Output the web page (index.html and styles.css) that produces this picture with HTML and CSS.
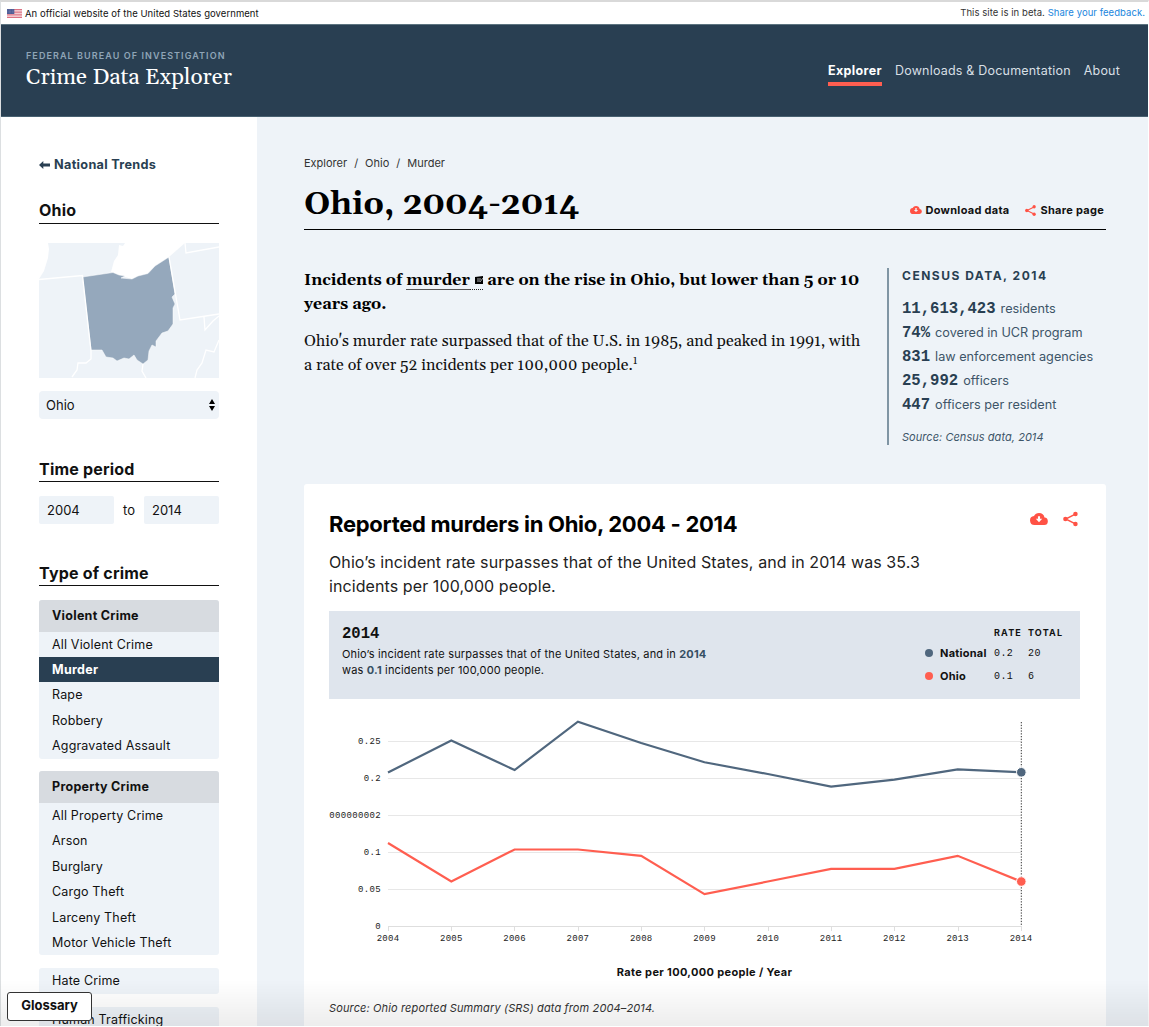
FILE: index.html
```html
<!DOCTYPE html>
<html lang="en">
<head>
<meta charset="utf-8">
<title>Crime Data Explorer</title>
<link rel="stylesheet" href="styles.css">
</head>
<body>
<svg class="defs" width="0" height="0" aria-hidden="true">
  <symbol id="cloud" viewBox="0 0 24 16"><path fill-rule="evenodd" d="M19.35 6.04A7.49 7.49 0 0 0 12 0C9.11 0 6.6 1.64 5.35 4.04A6 6 0 0 0 6 16h13a5 5 0 0 0 .35-9.96zM10.6 4.2h2.8v3.6h2.9L12 12.2 7.7 7.8h2.9z"/></symbol>
  <symbol id="share" viewBox="0 0 20 20"><path d="M16.5 3.5 3.5 10l13 6.5" fill="none" stroke="currentColor" stroke-width="1.9"/><circle cx="16.6" cy="3.2" r="3"/><circle cx="3.2" cy="10" r="3"/><circle cx="16.6" cy="16.8" r="3"/></symbol>
</svg>
<div class="page">
  <div class="banner">
    <div class="official">
      <svg class="flag" viewBox="0 0 15 9"><path fill="#fff" d="M0 0h15v9H0z"/><path stroke="#d4576c" stroke-width=".85" d="M0 .5h15M0 2.1h15M0 3.7h15M0 5.3h15M0 6.9h15M0 8.5h15"/><path fill="#4b5a94" d="M0 0h7.300v5H0z"/><path stroke="#a9b0d0" stroke-width=".5" stroke-dasharray=".6 .8" d="M.7 1h6M.7 2.400h6M.7 3.800h6"/></svg>
      <span>An official website of the United States government</span>
    </div>
    <div class="beta">This site is in beta. <a>Share your feedback.</a></div>
  </div>
  <header class="header">
    <div class="brand">
      <div class="agency">Federal Bureau of Investigation</div>
      <div class="site-name">Crime Data Explorer</div>
    </div>
    <nav class="nav"><a class="active">Explorer</a><a class="docs">Downloads &amp; Documentation</a><a>About</a></nav>
  </header>
  <div class="body">
    <aside class="sidebar">
      <a class="back"><svg viewBox="0 0 11 8"><path d="M4.300 0v2.500H11v3H4.300V8L0 4z"/></svg><span>National Trends</span></a>
      <h2 class="side-title">Ohio</h2>
      <svg class="map" viewBox="0 0 180 135">
        <path class="land" d="M0 0H180V135H0z"/>
        <path class="water" d="M0 36 5 28 9 15 10 6 9 0H0zM86 0 84 3 80 2 79 12 75 18 72 29 76 31 83 33 93 36 108 31 117 23 130 14 146 0z"/>
        <path class="state" d="M43.500 34 74 29.500 80 32 86 33 82 35 93 36 99 33 109 30.500 116 23 130 14 136 51 133 54 136 61 134 65 134 81 129 88 123 90 117 98 117 104 113 102 110 108 109 117 104 121 98 117 95 112 90 116 85 115 78 118 74 115 67 114 63 107 57 107 52 107z"/>
        <path class="line" d="M0 36.500 43.500 32.500 52 108 52 116 47 120 39 120 38 127 33 134M146 0 147 10 180 4M130 14 141 77 180 71M165 74 166 87 174 78 180 73M180 97 175 109 167 107 163 120 158 127 156 135M104 121 103 128 107 135"/>
      </svg>
      <div class="select"><span>Ohio</span><svg viewBox="0 0 6 12"><path d="M3 0 6 5H0zM0 7h6L3 12z"/></svg></div>
      <h2 class="side-title time">Time period</h2>
      <div class="years"><div class="year">2004</div><span>to</span><div class="year">2014</div></div>
      <h2 class="side-title type">Type of crime</h2>
      <ul class="crimes"><li class="group">Violent Crime</li><li>All Violent Crime</li><li class="selected">Murder</li><li>Rape</li><li>Robbery</li><li>Aggravated Assault</li></ul>
      <ul class="crimes"><li class="group">Property Crime</li><li>All Property Crime</li><li>Arson</li><li>Burglary</li><li>Cargo Theft</li><li>Larceny Theft</li><li>Motor Vehicle Theft</li></ul>
      <ul class="crimes"><li>Hate Crime</li></ul>
      <ul class="crimes"><li>Human Trafficking</li></ul>
    </aside>
    <main class="main">
      <div class="crumbs"><span>Explorer</span><span>/</span><span>Ohio</span><span>/</span><span>Murder</span></div>
      <div class="heading">
        <h1>Ohio, 2004-2014</h1>
        <div class="actions"><a><svg class="i-cloud"><use href="#cloud"/></svg>Download data</a><a><svg class="i-share"><use href="#share"/></svg>Share page</a></div>
      </div>
      <section class="intro">
        <div class="story">
          <p class="lead">Incidents of <span class="term"><u>murder</u> <svg viewBox="0 0 9 9"><path d="M0 1 8 0v8H0z"/><path d="M2 3h4M2 5h3M5 6l3-4" stroke="#eff4f8" stroke-width=".7"/></svg></span> are on the rise in Ohio, but lower than 5 or 10<br>years ago.</p>
          <p class="detail">Ohio's murder rate surpassed that of the U.S. in 1985, and peaked in 1991, with<br>a rate of over 52 incidents per 100,000 people.<sup>1</sup></p>
        </div>
        <div class="census">
          <h3>Census data, 2014</h3>
          <ul><li><b>11,613,423</b> residents</li><li><b>74%</b> covered in UCR program</li><li><b>831</b> law enforcement agencies</li><li><b>25,992</b> officers</li><li><b>447</b> officers per resident</li></ul>
          <p>Source: Census data, 2014</p>
        </div>
      </section>
      <section class="card">
        <div class="card-head"><h2>Reported murders in Ohio, 2004 - 2014</h2><div class="card-icons"><svg class="i-cloud"><use href="#cloud"/></svg><svg class="i-share"><use href="#share"/></svg></div></div>
        <p class="summary">Ohio’s incident rate surpasses that of the United States, and in 2014 was 35.3<br>incidents per 100,000 people.</p>
        <div class="panel">
          <div class="panel-text"><h3>2014</h3><p>Ohio’s incident rate surpasses that of the United States, and in <b>2014</b><br>was <b>0.1</b> incidents per 100,000 people.</p></div>
          <div class="legend">
            <span></span><span></span><span class="th">Rate</span><span class="th">Total</span>
            <i class="dot"></i><b>National</b><span class="num">0.2</span><span class="num">20</span>
            <i class="dot ohio"></i><b>Ohio</b><span class="num">0.1</span><span class="num">6</span>
          </div>
        </div>
        <svg class="chart" viewBox="329 710 751 240">
          <path class="grid" d="M388 741.500H1021M388 778.500H1021M388 815.500H1021M388 852.500H1021M388 889.500H1021"/>
          <path class="axis" d="M388 926.500H1021M388.500 926v5M451.500 926v5M514.500 926v5M578.500 926v5M641.500 926v5M704.500 926v5M768.500 926v5M831.500 926v5M894.500 926v5M958.500 926v5M1021.500 926v5"/>
          <g class="ylab"><text x="381" y="744">0.25</text><text x="381" y="781">0.2</text><text x="381" y="818">000000002</text><text x="381" y="855">0.1</text><text x="381" y="892">0.05</text><text x="381" y="929">0</text></g>
          <g class="xlab"><text x="388" y="940.500">2004</text><text x="451.300" y="940.500">2005</text><text x="514.600" y="940.500">2006</text><text x="577.900" y="940.500">2007</text><text x="641.200" y="940.500">2008</text><text x="704.500" y="940.500">2009</text><text x="767.800" y="940.500">2010</text><text x="831.100" y="940.500">2011</text><text x="894.400" y="940.500">2012</text><text x="957.700" y="940.500">2013</text><text x="1021" y="940.500">2014</text></g>
          <path class="cursor" d="M1021.300 722V926"/>
          <path class="series us" d="M388 772.500 451.300 740.500 514.600 770 577.900 721.700 641.200 743 704.500 762.300 767.800 774 831.100 786.700 894.400 779.700 957.700 769.300 1021 772.300"/>
          <path class="series oh" d="M388 843 451.300 881.500 514.600 849.500H577.900L641.200 855.800 704.500 894.200 767.800 881.500 831.100 868.800H894.400L957.700 855.800 1021 881.500"/>
          <circle class="pt us" cx="1021.300" cy="772.300" r="4.800"/><circle class="pt oh" cx="1021.300" cy="881.500" r="4.800"/>
        </svg>
        <div class="axis-title">Rate per 100,000 people / Year</div>
        <p class="source">Source: Ohio reported Summary (SRS) data from 2004–2014.</p>
      </section>
    </main>
  </div>
</div>
<div class="shade"></div>
<button class="glossary">Glossary</button>
</body>
</html>
```
FILE: styles.css
```css
* { box-sizing: border-box; }
html, body { height: 1027px; overflow: hidden; }
body { margin: 0; background: #fff; color: #111; font-family: Inter, "Liberation Sans", sans-serif; font-size: 13px; }
h1, h2, h3, p, ul { margin: 0; padding: 0; }
ul { list-style: none; }
svg { display: block; flex: none; }
.defs { position: absolute; }
.page { height: 1026px; overflow: hidden; border-top: 2px solid #d9d9d9; border-left: 1px solid #dcdfe1; border-right: 1px solid #fff; }

.banner { display: flex; justify-content: space-between; height: 22px; padding: 0 3px 0 6px; font-size: 9.500px; line-height: 22px; letter-spacing: .06px; }
.official { display: flex; align-items: center; gap: 3px; padding-top: 1px; }
.flag { width: 15px; height: 9px; }
.beta { line-height: 21px; color: #333; }
.beta a { color: #1a86dd; }

.header { display: flex; justify-content: space-between; height: 93px; padding: 0 28px 0 25px; background: #293f52; border-top: 1px solid #5d7480; border-bottom: 1px solid #486171; color: #fff; }
.brand { padding-top: 24px; }
.agency { font-size: 9px; line-height: 14px; font-weight: 600; letter-spacing: 1.080px; text-transform: uppercase; color: #8fa5b7; }
.site-name { font: 22.500px/30px Georgia, Gelasio, "Liberation Serif", serif; }
.nav { display: flex; gap: 13px; padding-top: 36px; font-size: 12.500px; line-height: 20px; color: #d8dfe5; }
.nav a { height: 25px; letter-spacing: .2px; }
.nav .active { color: #fff; font-weight: 700; letter-spacing: .35px; border-bottom: 4px solid #ff5e50; }

.body { display: flex; height: 910px; }
.sidebar { width: 256px; padding: 38px 38px 0; }
.back { display: flex; align-items: center; gap: 4px; height: 19px; color: #293f52; font-size: 12.700px; font-weight: 700; letter-spacing: .3px; }
.back svg { width: 11px; height: 8px; fill: #293f52; }
.side-title { margin-top: 26px; height: 24px; border-bottom: 1px solid #111; font-size: 16px; line-height: 21px; font-weight: 700; letter-spacing: .2px; }
.map { width: 180px; height: 135px; margin-top: 19px; }
.land { fill: #eef3f8; }
.water { fill: #fff; }
.state { fill: #95a8bc; stroke: #fff; stroke-width: .5; }
.line { fill: none; stroke: #fff; stroke-width: 1.300; }
.select { display: flex; justify-content: space-between; align-items: center; height: 28px; margin-top: 13px; padding: 0 4px 0 7px; border-radius: 4px; background: #eef3f8; }
.select svg { width: 6px; height: 12px; }
.side-title.time { margin-top: 39px; line-height: 22px; }
.years { display: flex; justify-content: space-between; height: 28px; margin-top: 14px; line-height: 28px; }
.year { width: 75px; padding-left: 8px; border-radius: 2px; background: #eef3f8; }
.side-title.type { margin-top: 38px; margin-bottom: 14px; line-height: 22px; }
.crimes { margin-bottom: 12.900px; border-radius: 3px; overflow: hidden; background: #eef3f8; font-size: 12.500px; letter-spacing: .17px; }
.crimes li { height: 25.400px; padding-left: 13px; line-height: 25.400px; }
.crimes .group { height: 31.600px; line-height: 31px; background: #d7dbe0; font-weight: 700; letter-spacing: .28px; }
.crimes .selected { background: #293f52; color: #fff; font-weight: 700; letter-spacing: .28px; }

.main { flex: 1; padding: 38px 42px 0 47px; background: #eef3f8; }
.crumbs { display: flex; gap: 7px; font-size: 11px; line-height: 16px; color: #333; }
.heading { display: flex; justify-content: space-between; height: 59px; border-bottom: 1px solid #000; }
h1 { font: 700 32.100px/68px Georgia, Gelasio, "Liberation Serif", serif; color: #000; }
.actions { display: flex; gap: 16px; padding: 31px 2px 0 0; font-size: 11px; font-weight: 700; line-height: 16px; letter-spacing: .28px; }
.actions a { display: flex; align-items: center; gap: 4px; height: 16px; }
.i-cloud, .i-share { fill: #ff5245; color: #ff5245; }
.actions .i-cloud { width: 12px; height: 8px; }
.actions .i-share { width: 11px; height: 11px; }
.intro { display: flex; justify-content: space-between; height: 177px; margin-top: 38px; }
.story { font-family: Georgia, Gelasio, "Liberation Serif", serif; font-size: 16px; line-height: 24px; white-space: nowrap; }
.lead { font-weight: 700; color: #000; }
.term { display: inline-flex; align-items: center; gap: 5px; height: 18px; line-height: 18px; border-bottom: 1px dotted #222; }
.term u { text-decoration: none; height: 18px; box-shadow: 0 1px #555; }
.term svg { width: 9px; height: 9px; margin-right: -.5px; }
.detail { margin-top: 13px; }
sup { font-size: 11px; line-height: 0; }
.census { width: 219px; padding-left: 13px; border-left: 2px solid #8095a4; color: #3d5568; white-space: nowrap; }
.census h3 { color: #293f52; font-size: 12px; line-height: 16px; font-weight: 700; letter-spacing: 1.500px; text-transform: uppercase; }
.census ul { margin-top: 13px; line-height: 24px; font-size: 12.700px; }
.census li { display: flex; align-items: center; gap: 5px; height: 24px; }
.census b { color: #293f52; font: 700 15.600px/24px "Liberation Mono", monospace; }
.census p { margin-top: 13px; font-size: 11px; line-height: 14px; font-style: italic; letter-spacing: .05px; }

.card { height: 560px; margin-top: 39px; padding: 26px 26px 0 25px; border-radius: 3px; background: #fff; }
.card-head { display: flex; justify-content: space-between; }
.card h2 { font-size: 22px; line-height: 28px; font-weight: 700; letter-spacing: -.28px; color: #000; }
.card-icons { display: flex; gap: 15px; padding: 0 2px 3px 0; height: 20px; align-items: center; }
.card-icons .i-cloud { width: 18px; height: 12px; }
.card-icons .i-share { width: 15px; height: 16px; }
.summary { margin-top: 12px; font-size: 16px; line-height: 24px; letter-spacing: .09px; color: #222; }
.panel { display: flex; justify-content: space-between; height: 88px; margin-top: 13px; padding: 13px 12px 0 13px; background: #dfe5ed; }
.panel h3 { padding-top: 1px; font: 700 15.600px/18px "Liberation Mono", monospace; }
.panel p { margin-top: 3px; font-size: 11px; line-height: 16px; letter-spacing: .17px; white-space: nowrap; }
.panel p b { color: #365064; }
.legend { display: grid; grid-template-columns: 15px 54px 34px 40px; grid-template-rows: 17px 24px 21px; align-items: center; font-size: 11px; }
.legend b { font-weight: 700; letter-spacing: .25px; }
.th { font-size: 9px; font-weight: 700; letter-spacing: 1.150px; text-transform: uppercase; }
.num { padding-top: 2px; font: 10px/14px "Liberation Mono", monospace; letter-spacing: .4px; }
.dot { width: 8px; height: 8px; border-radius: 50%; background: #50677e; }
.dot.ohio { background: #ff5e50; }
.chart { width: 751px; height: 240px; margin-top: 11px; }
.grid, .axis { fill: none; stroke: #e7e7e7; }
.axis { stroke: #dedede; }
.ylab, .xlab { font: 9px "Liberation Mono", monospace; fill: #222; }
.ylab { text-anchor: end; letter-spacing: .35px; }
.xlab { text-anchor: middle; letter-spacing: .25px; }
.cursor { stroke: #333; stroke-dasharray: 1.300 1.500; }
.series { fill: none; stroke-width: 2.200; }
.series.us { stroke: #50677e; }
.series.oh { stroke: #ff5e50; }
.pt { stroke: #fff; }
.pt.us { fill: #50677e; }
.pt.oh { fill: #ff5e50; }
.axis-title { margin-top: 14px; text-align: center; font-size: 11px; line-height: 16px; font-weight: 700; letter-spacing: .34px; }
.source { margin-top: 20px; font-size: 11px; line-height: 16px; font-style: italic; letter-spacing: .13px; color: #333; }
.shade { position: fixed; left: 0; right: 0; bottom: 1px; height: 46px; background: linear-gradient(rgba(0,0,0,0), rgba(0,0,0,.07)); }
.glossary { position: fixed; left: 7px; top: 992px; width: 85px; height: 29px; padding: 0 0 2px; border: 1px solid #333; border-radius: 3px; background: #fff; color: #111; font: 700 13px/25px Inter, sans-serif; }
```
